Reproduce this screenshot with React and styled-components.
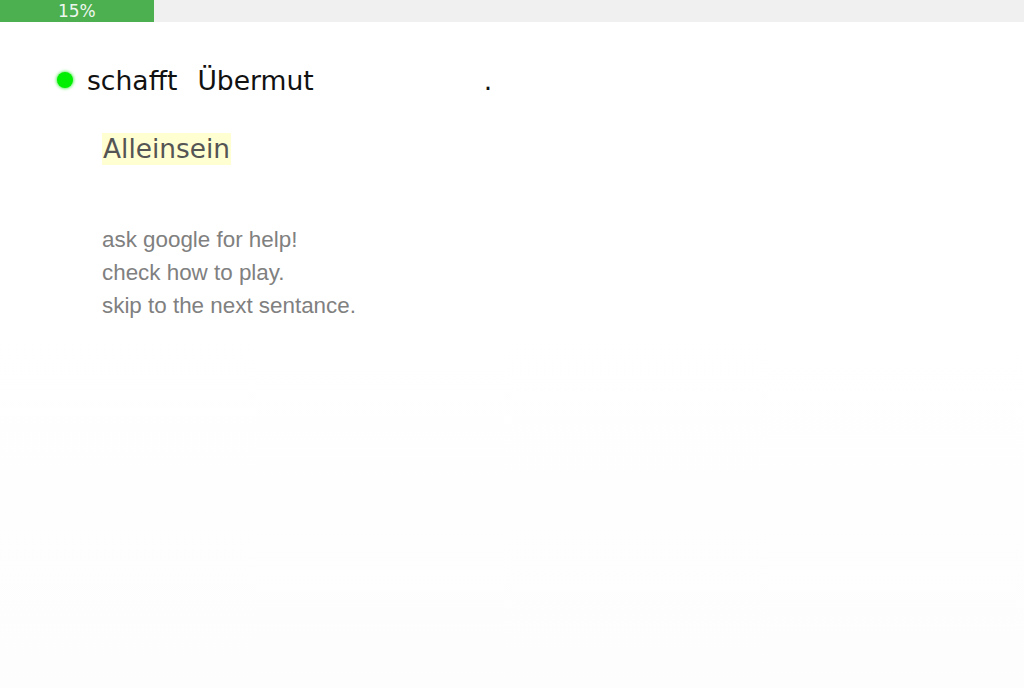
import React from "react";
import styled, { createGlobalStyle } from "styled-components";

const GlobalStyle = createGlobalStyle`
  html, body {
    margin: 0;
    padding: 0;
  }
  body {
    min-height: 100vh;
    background: linear-gradient(to bottom, #ffffff 0%, #ffffff 45%, #fdfdfd 100%);
    font-family: "DejaVu Sans", Verdana, sans-serif;
  }
`;

const Page = styled.div`
  min-height: 100vh;
`;

const ProgressTrack = styled.div`
  height: 22px;
  background: #f0f0f0;
`;

const ProgressFill = styled.div`
  height: 100%;
  background: #4caf50;
  color: #eef7ee;
  font-size: 17px;
  line-height: 22px;
  text-align: center;
`;

const Sentence = styled.div`
  display: flex;
  align-items: center;
  padding: 43px 0 0 57px;
  height: 30px;
  font-size: 26.6px;
  color: #111;
`;

const Dot = styled.span`
  width: 16px;
  height: 16px;
  border-radius: 50%;
  background: #00ee00;
  box-shadow: 0 0 3px 1px rgba(0, 230, 0, 0.6);
  margin-right: 14px;
`;

const Word = styled.span`
  margin-right: ${(p) => p.gap || 0}px;
`;

const Blank = styled.span`
  display: inline-block;
  width: 170px;
`;

const Answer = styled.div`
  margin: 38px 0 0 102px;
  display: inline-block;
  padding: 0 1px;
  height: 32px;
  line-height: 32px;
  font-size: 26.4px;
  color: #555;
  background: #ffffd2;
`;

const HelpList = styled.div`
  margin: 58px 0 0 102px;
  font-family: "Liberation Sans", Arial, sans-serif;
  font-size: 22.4px;
  line-height: 33px;
  color: #808080;
`;

const HelpLink = styled.div`
  cursor: pointer;
`;

export default function App() {
  const progress = 15;
  return (
    <Page>
      <GlobalStyle />
      <ProgressTrack>
        <ProgressFill style={{ width: `${progress}%` }}>{progress}%</ProgressFill>
      </ProgressTrack>

      <Sentence>
        <Dot />
        <Word gap={20}>schafft</Word>
        <Word>Übermut</Word>
        <Blank />
        <Word>.</Word>
      </Sentence>

      <Answer>Alleinsein</Answer>

      <HelpList>
        <HelpLink>ask google for help!</HelpLink>
        <HelpLink>check how to play.</HelpLink>
        <HelpLink>skip to the next sentance.</HelpLink>
      </HelpList>
    </Page>
  );
}
